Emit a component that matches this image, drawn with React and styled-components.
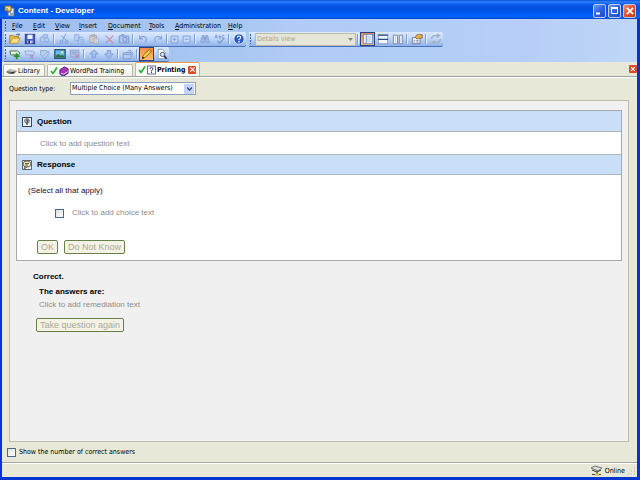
import React, { useState } from 'react'
import styled, { createGlobalStyle, css } from 'styled-components'

const GlobalStyle = createGlobalStyle`
  * {
    box-sizing: border-box;
  }
  body {
    margin: 0;
    font-family: 'DejaVu Sans Condensed', 'DejaVu Sans', sans-serif;
    font-size: 7px;
    line-height: 10px;
    color: #000;
  }
  button, select, input {
    font: inherit;
    color: inherit;
    margin: 0;
    padding: 0;
  }
  svg {
    display: block;
    flex: none;
  }
`

const MENUS = [
  { label: 'File', width: 21 },
  { label: 'Edit', width: 22 },
  { label: 'View', width: 24 },
  { label: 'Insert', width: 29 },
  { label: 'Document', width: 41 },
  { label: 'Tools', width: 26 },
  { label: 'Administration', width: 53 },
  { label: 'Help', width: 24 },
]

const FAINT = '#8aa9dc'

const icons = {
  open: (
    <>
      <path d="M1 12V3h4l1 1h5v3" fill="#f5c64a" stroke="#a87510" />
      <path d="M1 12l3-6h9l-3 6z" fill="#ffe08a" stroke="#c08a1c" />
      <path d="M8 2q2-1.500 4 0M12 .5v2h-2" fill="none" stroke="#47608c" />
    </>
  ),
  save: (
    <>
      <rect x="1.500" y="1.500" width="11" height="11" fill="#4a5cc4" stroke="#26337c" />
      <rect x="4" y="2" width="6" height="5" fill="#e9effb" />
      <rect x="4" y="9" width="6" height="3" fill="#c5cfe6" />
      <rect x="5" y="9" width="2" height="3" fill="#26337c" />
    </>
  ),
  preview: (
    <g fill="#b4cbf1" stroke={FAINT}>
      <path d="M3 5l2-3h5v4M1.500 5.500h9v5h-9z" />
      <circle cx="9" cy="8" r="2.500" />
      <path d="M11 10l2 2" />
    </g>
  ),
  cut: (
    <g fill="none" stroke="#7796cf">
      <path d="M9 1L5 9M4 3l6 6" />
      <circle cx="4" cy="10.500" r="1.700" />
      <circle cx="10" cy="10.500" r="1.700" />
    </g>
  ),
  copy: (
    <g fill="#bdd1f4" stroke={FAINT}>
      <path d="M2 2h5v7H2zM6 5h5l1 1v6H6zM8 8h3M8 10h3" />
    </g>
  ),
  paste: (
    <g stroke="#a5a8b5">
      <path d="M2 3h8v8H2z" fill="#d5cdbd" />
      <path d="M4 2h4v2H4z" fill="#b6c0d6" />
      <path d="M7 6h5v6H7zM8.500 8h2M8.500 10h2" fill="#dfe7f6" />
    </g>
  ),
  remove: <path d="M3 3l9 9M12 3l-9 9" stroke="#cb8fae" strokeWidth="1.400" />,
  camera: (
    <g fill="#afc6ef" stroke="#7592c8">
      <path d="M1.500 3.500h11v8h-11zM4 3V2h3v1" />
      <circle cx="8" cy="7.500" r="2.500" />
    </g>
  ),
  undo: <path d="M3 3v4h4M3 7q2-3.500 5-3t3 3.500q0 2-2 3" fill="none" stroke="#7e9dd6" strokeWidth="1.200" />,
  redo: <path d="M11 3v4H7M11 7Q9 3.500 6 4t-3 3.500q0 2 2 3" fill="none" stroke="#86a4dc" strokeWidth="1.200" />,
  expand: <path d="M2.500 3.500h8v8h-8zM6.500 5.500v4M4.500 7.500h4" fill="#c4d7f7" stroke="#7d9dd6" />,
  collapse: <path d="M2.500 3.500h8v8h-8zM4.500 7.500h4" fill="#c4d7f7" stroke="#7d9dd6" />,
  find: (
    <g fill="#a5bde6" stroke="#7f9dd2">
      <path d="M2 11l2-8h2v8zM8 3h2l2 8H8zM6 5h2v2H6z" />
    </g>
  ),
  spell: (
    <g fill="none" stroke="#7c9ad2">
      <path d="M1 6l1.500-4L4 6M1.500 5h2M6 2v4h2V4H6M12 2.500h-2V6h2" />
      <path d="M4 9l2.500 3L12 6" strokeWidth="1.500" />
    </g>
  ),
  help: (
    <>
      <circle cx="7" cy="7" r="6" fill="#2859c9" stroke="#e9f1ff" />
      <path d="M5 5.500q0-2 2-2t2 1.700Q9 6.500 7 7.500v1" fill="none" stroke="#fff" strokeWidth="1.300" />
      <rect x="6" y="9.500" width="2" height="1.500" fill="#fff" />
    </>
  ),
  paneLeft: (
    <>
      <rect x="1.500" y="1.500" width="11" height="11" fill="#eef4ff" stroke="#5f7fb8" />
      <path d="M5 2v10" stroke="#5f7fb8" />
      <path d="M6 4.500h5M6 7h5M6 9.500h5" stroke="#9bb5e1" />
    </>
  ),
  paneRows: (
    <>
      <rect x="1.500" y="2.500" width="11" height="10" fill="#f2f6ff" stroke="#8a9cbd" />
      <path d="M1 2.500h12M1 7.500h12" stroke="#324f87" strokeWidth="1.600" />
    </>
  ),
  paneColumns: (
    <>
      <path d="M1.500 2.500h5v10h-5zM8.500 2.500h4v10h-4z" fill="#f2f6ff" stroke="#6a7f9f" />
      <path d="M4 4v7M10.500 4v7" stroke="#b5c6e2" />
    </>
  ),
  properties: (
    <>
      <path d="M1.500 5.500h9v7h-9z" fill="#fff" stroke="#5f6d8c" />
      <path d="M3 8.500h2M3 10.500h2M6 8.500h3M6 10.500h3" stroke="#677797" />
      <path d="M5 5l2-3h6v4H9L7 7z" fill="#e9b954" stroke="#83602a" />
    </>
  ),
  refresh: (
    <g fill="none" stroke="#9fb2bf" strokeWidth="1.500">
      <path d="M2 7q0-4 4-4h4M8 1l3 2-3 2.500M12 7q0 4-4 4H4M6 9l-3 2 3 2" />
    </g>
  ),
  addItem: (
    <>
      <path d="M1 3.500h9l3 2.500-2 2H2z" fill="#e9f0dd" stroke="#3d6a3b" />
      <path d="M9 6v7M5.500 9.500h7" stroke="#24942b" strokeWidth="2.200" />
    </>
  ),
  removeItem: (
    <g stroke="#91a8d3">
      <path d="M1 3.500h9l3 2.500-2 2H2z" fill="#c2d3f3" />
      <path d="M7 8l4 4M11 8l-4 4" stroke="#a391c4" strokeWidth="1.400" />
    </g>
  ),
  tag: (
    <g fill="#bdd0f1" stroke="#829fd3">
      <path d="M2 3h7l3 3-5 6-5-4zM5 9l7-6" />
    </g>
  ),
  picture: (
    <>
      <rect x="1" y="2" width="12" height="10" fill="#68bbe9" stroke="#174769" strokeWidth="1.400" />
      <path d="M2 11V9l3-2 3 2 2-1 2 2v1z" fill="#2c6d38" />
      <circle cx="9.500" cy="5" r="1.300" fill="#f8ed89" />
    </>
  ),
  pictureOff: (
    <g stroke="#859ec9">
      <rect x="1.500" y="2.500" width="10" height="8" fill="#b1c4e6" />
      <path d="M3 5h7M3 7h5" />
      <path d="M7 7l5 5M12 7l-5 5" stroke="#b494b8" strokeWidth="1.400" />
    </g>
  ),
  up: <path d="M7 2l5 5H9v4H5V7H2z" fill="#a5c0ef" stroke="#7898d3" />,
  down: <path d="M7 12L2 7h3V3h4v4h3z" fill="#a5c0ef" stroke="#7898d3" />,
  publish: (
    <g fill="#b7cbee" stroke="#7f9bcd">
      <path d="M1.500 5.500h9v7h-9zM2 7.500h8M6 5l3-3 3 3v4" />
    </g>
  ),
  pencil: (
    <>
      <path d="M1.500 12.500l1-4L10 1.500l2.500 2.500-7.500 7z" fill="#f6d43e" stroke="#765a18" />
      <path d="M9 3l2 2" stroke="#b66c36" />
      <path d="M1 13l1-3 2 1.800z" fill="#2c2214" />
    </>
  ),
  pagePreview: (
    <>
      <path d="M2.500 1.500h5l3 3v8h-8z" fill="#fff" stroke="#7f93b6" />
      <circle cx="7.500" cy="7.500" r="2.500" fill="#d7e8f4" stroke="#38465f" />
      <path d="M9.500 9.500l3 3" stroke="#1e2a42" strokeWidth="1.800" />
    </>
  ),
}

const Icon = ({ name }) => (
  <svg width="12" height="12" viewBox="0 0 14 14" aria-hidden="true">
    {icons[name]}
  </svg>
)

const Tool = ({ icon, label, active, disabled, narrow }) => (
  <ToolButton type="button" aria-label={label} $active={active} $narrow={narrow} disabled={disabled}>
    <Icon name={icon} />
  </ToolButton>
)

const CheckMark = () => (
  <svg width="8" height="9" viewBox="0 0 8 9" aria-hidden="true">
    <path d="M1 5L3 7.500 7 1.500" fill="none" stroke="#17b52b" strokeWidth="1.600" />
  </svg>
)

const CloseGlyph = ({ size }) => (
  <svg width={size} height={size} viewBox="0 0 8 8" aria-hidden="true">
    <path d="M1.500 1.500l5 5M6.500 1.500l-5 5" stroke="#fff" strokeWidth="1.400" />
  </svg>
)

const TitleBar = () => (
  <Title>
    <svg width="11" height="12" viewBox="0 0 11 12" aria-hidden="true">
      <path d="M4 3h6v8H4z" fill="#dceafa" stroke="#4d6b9f" />
      <path d="M1 1h6v5H1z" fill="#f3e08d" stroke="#806422" />
      <path d="M3 3v4h4M6 9h3" fill="none" stroke="#58607a" />
    </svg>
    <h1>Content - Developer</h1>
    <WindowButtons>
      <WindowButton type="button" aria-label="Minimize">
        <svg width="9" height="9" viewBox="0 0 9 9">
          <path d="M1 7.500h4" stroke="#fff" strokeWidth="2" />
        </svg>
      </WindowButton>
      <WindowButton type="button" aria-label="Maximize">
        <svg width="9" height="9" viewBox="0 0 9 9">
          <path d="M1.500 2v5.500h6V2M1 2h7" fill="none" stroke="#fff" />
          <path d="M1 2h7" stroke="#fff" strokeWidth="2" />
        </svg>
      </WindowButton>
      <WindowButton type="button" aria-label="Close" $close>
        <CloseGlyph size={10} />
      </WindowButton>
    </WindowButtons>
  </Title>
)

const Toolbars = () => (
  <Band>
    <Menu>
      <Grip />
      {MENUS.map(({ label, width }) => (
        <MenuItem key={label} type="button" $width={width}>
          <u>{label[0]}</u>
          {label.slice(1)}
        </MenuItem>
      ))}
    </Menu>
    <ToolRow>
      <ToolGroup>
        <Grip />
        <Tool icon="open" label="Open" />
        <Tool icon="save" label="Save" />
        <Tool icon="preview" label="Print preview" disabled />
        <Separator />
        <Tool icon="cut" label="Cut" disabled />
        <Tool icon="copy" label="Copy" disabled />
        <Tool icon="paste" label="Paste" disabled />
        <Tool icon="remove" label="Delete" disabled />
        <Tool icon="camera" label="Record" disabled />
        <Separator />
        <Tool icon="undo" label="Undo" disabled />
        <Tool icon="redo" label="Redo" disabled />
        <Separator />
        <Tool icon="expand" label="Expand" disabled narrow />
        <Tool icon="collapse" label="Collapse" disabled narrow />
        <Separator />
        <Tool icon="find" label="Find" disabled />
        <Tool icon="spell" label="Spelling" disabled />
        <Separator />
        <Tool icon="help" label="Help" />
      </ToolGroup>
      <ToolGroup>
        <Grip />
        <SelectBox $view>
          <select aria-label="View" disabled>
            <option>Details view</option>
          </select>
          <svg width="5" height="3" viewBox="0 0 5 3" aria-hidden="true">
            <path d="M0 0h5L2.500 3z" fill="#85847a" />
          </svg>
        </SelectBox>
        <Separator />
        <Tool icon="paneLeft" label="Left pane" active />
        <Tool icon="paneRows" label="Split rows" />
        <Tool icon="paneColumns" label="Split columns" />
        <Separator />
        <Tool icon="properties" label="Properties" />
        <Separator />
        <Tool icon="refresh" label="Refresh" disabled />
      </ToolGroup>
    </ToolRow>
    <ToolRow>
      <ToolGroup>
        <Grip />
        <Tool icon="addItem" label="Add item" />
        <Tool icon="removeItem" label="Remove item" disabled />
        <Tool icon="tag" label="Edit item" disabled />
        <Tool icon="picture" label="Picture" />
        <Tool icon="pictureOff" label="Remove picture" disabled />
        <Separator />
        <Tool icon="up" label="Move up" disabled />
        <Tool icon="down" label="Move down" disabled />
        <Separator />
        <Tool icon="publish" label="Publish" disabled />
        <Separator />
        <Tool icon="pencil" label="Edit" active />
        <Tool icon="pagePreview" label="Preview" />
      </ToolGroup>
    </ToolRow>
  </Band>
)

const Tabs = () => (
  <TabStrip>
    <Tab $width={42}>
      <button type="button">
        <svg width="11" height="10" viewBox="0 0 11 10" aria-hidden="true">
          <path d="M0 6l4-3 7 2-3 3H3z" fill="#777" />
          <path d="M1 5l4-2 5 2-3 1z" fill="#c7c7c7" />
          <path d="M5 7l3-1" stroke="#222" />
        </svg>
        Library
      </button>
    </Tab>
    <Tab $width={86}>
      <button type="button">
        <CheckMark />
        <svg width="10" height="10" viewBox="0 0 11 11" aria-hidden="true">
          <path d="M1 4l5-3 4 2v5l-5 3-4-2z" fill="#a735ba" stroke="#511368" />
          <path d="M2 8l3 1 5-3" fill="none" stroke="#e9d8f1" />
          <path d="M1 9l3 2 2-1" stroke="#2b5cbf" fill="none" />
        </svg>
        WordPad Training
      </button>
    </Tab>
    <Tab $width={65} $active>
      <button type="button">
        <CheckMark />
        <svg width="9" height="10" viewBox="0 0 9 10" aria-hidden="true">
          <rect x=".5" y="1" width="8" height="8" fill="#fff" stroke="#5f6f96" />
          <path d="M3 4q0-1.500 1.500-1.500T6 4q0 .8-1.500 1.500v1M4.500 7v1" fill="none" stroke="#26396b" />
        </svg>
        Printing
      </button>
      <SmallClose type="button" aria-label="Close Printing">
        <CloseGlyph size={7} />
      </SmallClose>
    </Tab>
    <SmallClose type="button" aria-label="Close document" $end>
      <CloseGlyph size={6} />
    </SmallClose>
  </TabStrip>
)

const App = () => {
  const [showCount, setShowCount] = useState(false)
  const [choice, setChoice] = useState(false)

  return (
    <Window>
      <GlobalStyle />
      <TitleBar />
      <Toolbars />
      <Tabs />
      <Content>
        <TypeRow>
          <label htmlFor="question-type">Question type:</label>
          <SelectBox>
            <select id="question-type">
              <option>Multiple Choice (Many Answers)</option>
            </select>
            <Arrow>
              <svg width="5" height="4" viewBox="0 0 5 4" aria-hidden="true">
                <path d="M0 .5L2.500 3 5 .5" fill="none" stroke="#2f4a80" strokeWidth="1.400" />
              </svg>
            </Arrow>
          </SelectBox>
        </TypeRow>
        <Panel>
          <Card>
            <SectionTitle>
              <svg width="10" height="10" viewBox="0 0 10 10" aria-hidden="true">
                <rect x=".5" y=".5" width="9" height="9" fill="#eef1f4" stroke="#3b424c" />
                <circle cx="5" cy="4" r="2.300" fill="#b5bbc2" stroke="#68707a" />
                <path d="M4 3.500q1-1.500 2 0L5 5v3" fill="none" stroke="#333a44" />
              </svg>
              Question
            </SectionTitle>
            <QuestionBody>
              <Prompt type="button">Click to add question text</Prompt>
            </QuestionBody>
            <SectionTitle $second>
              <svg width="10" height="10" viewBox="0 0 10 10" aria-hidden="true">
                <path d="M.5 .5h9v9h-9z" fill="#eef1f4" stroke="#5b626c" />
                <ellipse cx="5" cy="4" rx="4" ry="3" fill="#f0ebc9" stroke="#68644f" />
                <path d="M3 3.500h4M3 5h3M3 7L2 9l3-2" fill="none" stroke="#5e5a4c" />
              </svg>
              Response
            </SectionTitle>
            <ResponseBody>
              <p>(Select all that apply)</p>
              <Choice>
                <Check
                  type="checkbox"
                  aria-label="Choice"
                  checked={choice}
                  onChange={(e) => setChoice(e.target.checked)}
                />
                <Prompt type="button">Click to add choice text</Prompt>
              </Choice>
              <Actions>
                <ActionButton type="button">OK</ActionButton>
                <ActionButton type="button">Do Not Know</ActionButton>
              </Actions>
            </ResponseBody>
          </Card>
          <Feedback>
            <h2>Correct.</h2>
            <Remediation>
              <h3>The answers are:</h3>
              <Prompt type="button">Click to add remediation text</Prompt>
            </Remediation>
            <ActionButton type="button">Take question again</ActionButton>
          </Feedback>
        </Panel>
        <CountRow>
          <Check type="checkbox" checked={showCount} onChange={(e) => setShowCount(e.target.checked)} />
          Show the number of correct answers
        </CountRow>
      </Content>
      <StatusBar>
        <svg width="11" height="11" viewBox="0 0 11 11" aria-hidden="true">
          <path d="M0 3l4-2 7 2-4 3z" fill="#ddd" stroke="#777" />
          <path d="M1 5l5 2 4-2M6 7v2" fill="none" stroke="#333" />
          <path d="M1 9.500h9" stroke="#444" />
          <path d="M4 9.500h4" stroke="#e8bd27" strokeWidth="2" />
        </svg>
        Online
        <svg width="8" height="8" viewBox="0 0 8 8" aria-hidden="true">
          <path d="M6 1h1M6 4h1M3 4h1M6 7h1M3 7h1M0 7h1" stroke="#b3af9b" />
        </svg>
      </StatusBar>
    </Window>
  )
}

const Window = styled.div`
  display: flex;
  flex-direction: column;
  min-height: 100vh;
  background: #e8e8d9;
  border: solid #0831d9;
  border-width: 0 3px 3px 2px;
  border-bottom-color: #0635cf;
`

const Title = styled.header`
  display: flex;
  align-items: center;
  gap: 3px;
  height: 19px;
  margin: 0 -3px 0 -2px;
  padding: 2px 4px 0 4px;
  background: linear-gradient(#0a4fd0, #2c83ff 10%, #0a5bee 22%, #0050dc 45%, #0059f0 68%, #0264ff 86%, #0349c8);
  h1 {
    flex: 1;
    margin: 0;
    font: bold 8px/12px 'Liberation Sans', Arial, sans-serif;
    color: #fff;
  }
`

const WindowButtons = styled.div`
  display: flex;
  gap: 2px;
`

const WindowButton = styled.button`
  display: flex;
  align-items: center;
  justify-content: center;
  width: 13px;
  height: 14px;
  border: 1px solid #b9cdf8;
  border-radius: 2px;
  background: ${({ $close }) =>
    $close ? 'linear-gradient(135deg, #f29072, #e2502c 50%, #c93a12)' : 'linear-gradient(135deg, #6d9bf5, #2e61e4 50%, #1c48ca)'};
`

const Band = styled.div`
  padding-left: 2px;
  background: linear-gradient(90deg, #9fbef0, #a9c8f1 38%, #b1cbf6 45%, #b0cef6 65%, #b7cdf7 82%, #bfd7f7);
`

const Menu = styled.nav`
  display: flex;
  align-items: center;
  height: 13px;
`

const MenuItem = styled.button`
  width: ${({ $width }) => $width}px;
  padding-left: 5px;
  border: 0;
  background: none;
  line-height: 12px;
  text-align: left;
  white-space: nowrap;
`

const Grip = styled.span`
  flex: none;
  width: 1px;
  height: 10px;
  margin: 0 1px;
  background: repeating-linear-gradient(#3d5f9f 0 2px, transparent 2px 3px);
`

const ToolRow = styled.div`
  display: flex;
  gap: 3px;
  height: 15px;
`

const ToolGroup = styled.div`
  display: flex;
  align-items: center;
  border-bottom: 1px solid #4a73bd;
  border-radius: 0 2px 2px 0;
  background: linear-gradient(#dce9fd, #c3d8f9 45%, #8fb1e9);
`

const ToolButton = styled.button`
  display: flex;
  align-items: center;
  justify-content: center;
  width: ${({ $narrow }) => ($narrow ? 12 : 15)}px;
  height: 14px;
  border: 0;
  background: none;
  ${({ $active }) =>
    $active &&
    css`
      border: 1px solid #2a4186;
      background: linear-gradient(#f58b44, #ffc07b);
    `}
`

const Separator = styled.span`
  width: 1px;
  height: 10px;
  margin: 0 2px 0 1px;
  background: #7c9fd9;
  box-shadow: 1px 0 #e8f0fd;
`

const SelectBox = styled.div`
  display: flex;
  align-items: center;
  width: ${({ $view }) => ($view ? 101 : 126)}px;
  height: 13px;
  margin-left: ${({ $view }) => ($view ? 3 : 0)}px;
  padding-right: ${({ $view }) => ($view ? 2 : 1)}px;
  border: 1px solid ${({ $view }) => ($view ? '#b9bba9' : '#8a9fbd')};
  background: ${({ $view }) => ($view ? '#e6e6d8' : '#fff')};
  color: ${({ $view }) => ($view ? '#a5a493' : '#000')};
  select {
    flex: 1;
    min-width: 0;
    padding-left: 1px;
    appearance: none;
    border: 0;
    background: none;
    line-height: 11px;
    opacity: 1;
  }
`

const Arrow = styled.span`
  display: grid;
  place-items: center;
  width: 10px;
  height: 10px;
  background: #c1d3fb;
  pointer-events: none;
`

const TabStrip = styled.div`
  display: flex;
  align-items: flex-end;
  gap: 2px;
  height: 15px;
  padding-left: 1px;
  border-bottom: 1px solid #9fa39e;
`

const Tab = styled.div`
  display: flex;
  align-items: center;
  width: ${({ $width }) => $width}px;
  height: ${({ $active }) => ($active ? 14 : 12)}px;
  padding: 0 3px 0 2px;
  border: 1px solid #b9b9aa;
  border-bottom: 0;
  border-radius: 2px 2px 0 0;
  background: linear-gradient(#fff, #f2f2ea);
  white-space: nowrap;
  button {
    display: flex;
    align-items: center;
    gap: 1px;
    padding: 0;
    border: 0;
    background: none;
  }
  ${({ $active }) =>
    $active &&
    css`
      justify-content: space-between;
      border-top: 1px solid #f0a03c;
      background: #fdfdfb;
      font-weight: bold;
    `}
`

const SmallClose = styled.button`
  && {
    display: grid;
    place-items: center;
    width: 8px;
    height: 8px;
    border: 0;
    border-radius: 1px;
    background: #dc4a28;
    ${({ $end }) => $end && 'margin: 0 0 3px auto;'}
  }
`

const Content = styled.main`
  display: flex;
  flex: 1;
  flex-direction: column;
  padding: 3px 8px 5px 7px;
  border-top: 1px solid #fff;
  border-bottom: 1px solid #a6a79c;
`

const TypeRow = styled.div`
  display: flex;
  align-items: center;
  height: 15px;
  label {
    width: 61px;
  }
`

const Panel = styled.section`
  flex: 1;
  margin-top: 4px;
  padding: 9px 6px;
  border: 1px solid #bfbcaa;
  background: #f0f0f0;
  font-family: 'Liberation Sans', Arial, sans-serif;
  font-size: 8px;
`

const Card = styled.div`
  border: 1px solid #a8a9ac;
  background: #fff;
`

const SectionTitle = styled.h2`
  display: flex;
  align-items: center;
  gap: 5px;
  height: 21px;
  margin: 0;
  padding: 1px 0 0 5px;
  border-bottom: 1px solid #b0b5bd;
  ${({ $second }) => $second && 'border-top: 1px solid #b0b5bd;'}
  background: #c9dff8;
  font-size: 8px;
`

const QuestionBody = styled.div`
  display: flex;
  align-items: center;
  height: 22px;
  padding: 2px 0 0 23px;
`

const Prompt = styled.button`
  border: 0;
  background: none;
  color: #8c8c8c;
`

const ResponseBody = styled.div`
  padding: 11px 11px 6px;
  p {
    margin: 0;
    color: #2a0a38;
  }
`

const Choice = styled.div`
  display: flex;
  align-items: center;
  gap: 8px;
  margin: 12px 0 0 27px;
`

const Actions = styled.div`
  display: flex;
  gap: 6px;
  margin: 22px 0 0 9px;
`

const ActionButton = styled.button`
  height: 14px;
  padding: 0 3px;
  border: 1px solid #67804a;
  border-radius: 2px;
  background: #f4f2e4;
  color: #aaa99c;
  font-size: 9px;
  line-height: 12px;
`

const Feedback = styled.div`
  padding: 11px 20px;
  h2, h3 {
    margin: 0;
    font-size: 8px;
  }
  h2 {
    margin-left: -3px;
  }
`

const Remediation = styled.div`
  display: flex;
  flex-direction: column;
  align-items: flex-start;
  gap: 3px;
  margin: 5px 0 8px 3px;
`

const Check = styled.input`
  appearance: none;
  width: 9px;
  height: 9px;
  border: 1px solid #46688f;
  background: linear-gradient(135deg, #dedfdc, #fff);
  &:checked {
    box-shadow: inset 0 0 0 2px #fff;
    background: #21a121;
  }
`

const CountRow = styled.label`
  display: flex;
  align-items: center;
  align-self: flex-start;
  gap: 3px;
  margin: 5px 0 0 -2px;
`

const StatusBar = styled.footer`
  display: flex;
  align-items: center;
  justify-content: flex-end;
  gap: 3px;
  height: 14px;
  padding-right: 1px;
  border-top: 1px solid #fff;
`

export default App
